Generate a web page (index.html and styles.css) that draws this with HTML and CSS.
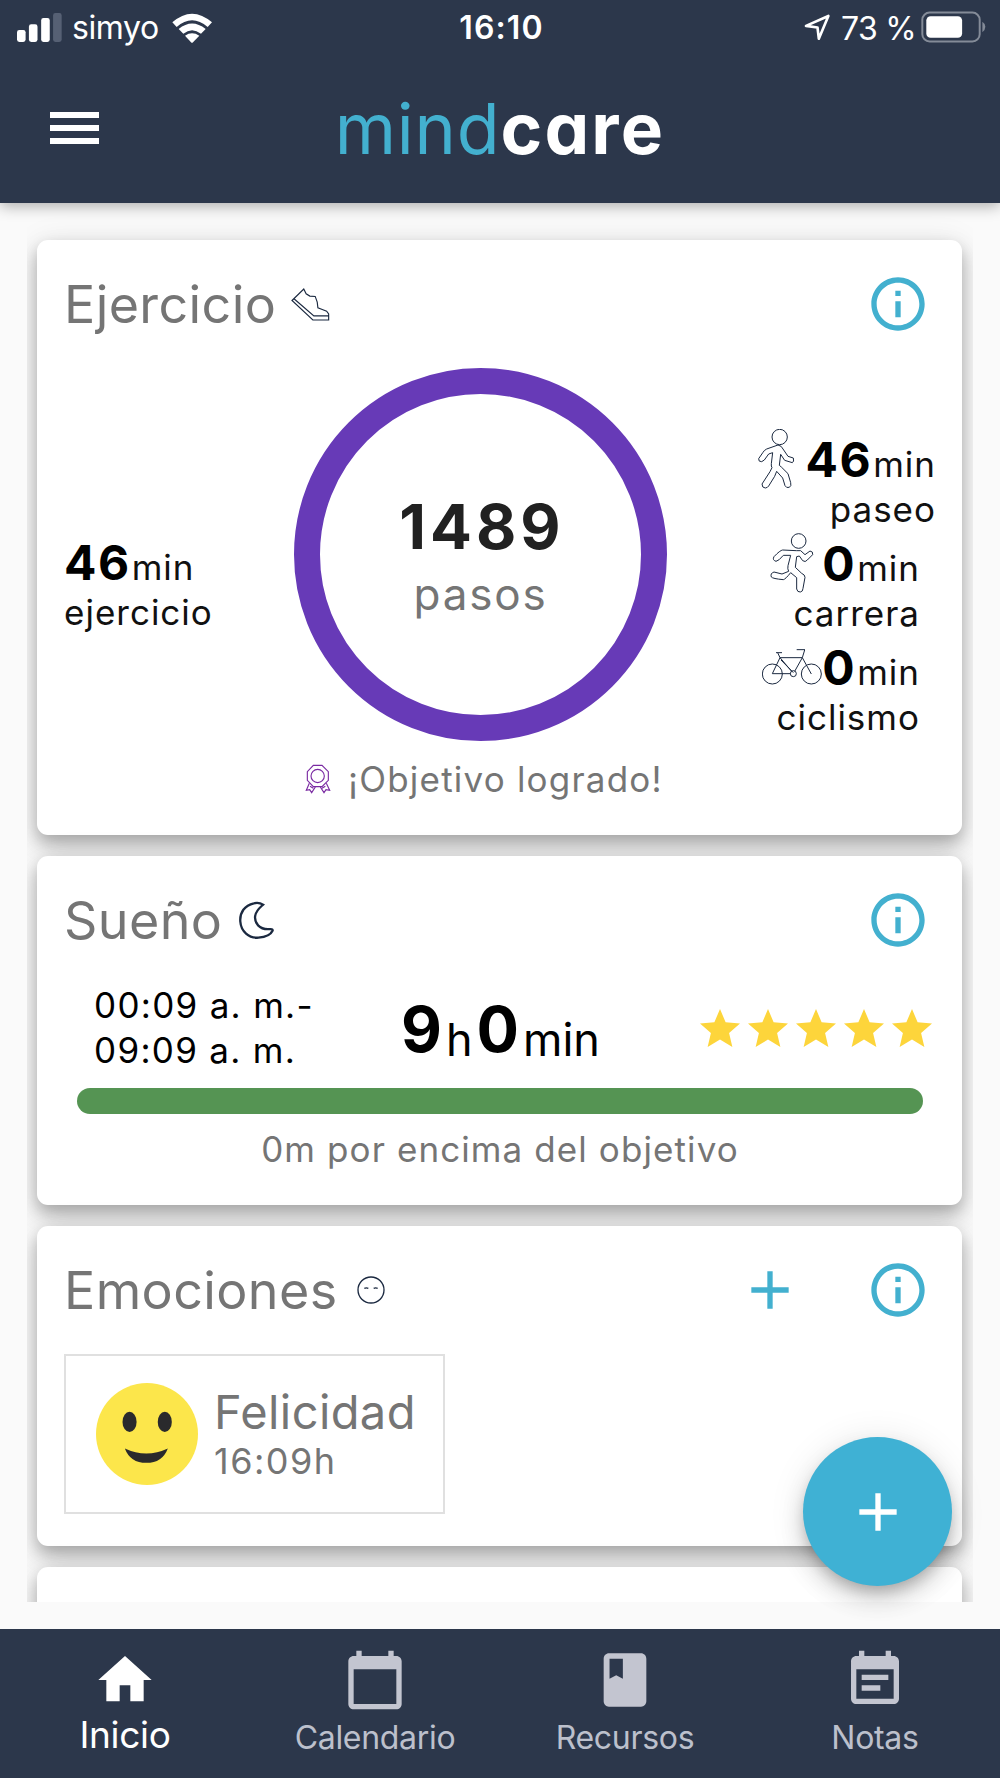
FILE: index.html
```html
<!DOCTYPE html>
<html lang="es">
<head>
    <meta charset="UTF-8">
    <meta name="viewport" content="width=device-width, initial-scale=1.0">
    <title>mindcare</title>

    <link rel="stylesheet" href="styles.css">
</head>
<body>

    <header class="header">
        <div class="status-bar">
            <div class="status-left">
                <svg class="signal" viewBox="51 36 136 87">
                    <rect x="51" y="87" width="26" height="36" rx="7"/>
                    <rect x="87" y="70" width="26" height="53" rx="7"/>
                    <rect x="124" y="51" width="26" height="72" rx="7"/>
                    <rect class="off" x="160" y="36" width="26" height="87" rx="7"/>
                </svg>
                <span class="carrier">simyo</span>
                <svg class="wifi" viewBox="514 36 120 90">
                    <path d="M515 64Q574 12 634 64L621 78Q574 38 528 78Z"/>
                    <path d="M534 84Q574 51 615 84L601 98Q574 77 548 98Z"/>
                    <path d="M553 104Q574 90 596 104L577 124Q574 127 571 124Z"/>
                </svg>
            </div>
            <div class="clock">16:10</div>
            <div class="status-right">
                <svg class="arrow" viewBox="914 43 80 82">
                    <path d="M919 79L987 49L958 118L954 84Z"/>
                </svg>
                <span class="percent">73 %</span>
                <svg class="battery" viewBox="1262 31 196 95">
                    <rect class="shell" x="1266" y="35" width="173" height="87" rx="22"/>
                    <rect x="1278" y="46" width="108" height="65" rx="13"/>
                    <path class="nub" d="M1447 63Q1456 69 1456 78T1447 94Z"/>
                </svg>
            </div>
        </div>
        <div class="toolbar">
            <div class="menu-btn"><i></i><i></i><i></i></div>
            <div class="logo"><span class="mind">mind</span><span class="care">care</span></div>
        </div>
    </header>

    <main class="list">

        <!-- Ejercicio -->
        <section class="card exercise">
            <div class="card-header">
                <h2>Ejercicio</h2>
                <svg class="shoe" viewBox="812 203 116 98">
                    <path d="M815 240L850 206L857 220L868 227L884 228L890 245L892 262L905 267L918 272L924 280V298H877ZM820 234L880 286H924"/>
                </svg>
                <svg class="icon info" viewBox="0 0 24 24"><path d="M11 7h2v2h-2zm0 4h2v6h-2zm1-9C6.48 2 2 6.48 2 12s4.48 10 10 10 10-4.48 10-10S17.52 2 12 2zm0 18c-4.41 0-8-3.59-8-8s3.59-8 8-8 8 3.59 8 8-3.59 8-8 8z"/></svg>
            </div>
            <div class="exercise-body">
                <div class="total">
                    <div><b>46</b>min</div>
                    <div>ejercicio</div>
                </div>
                <div class="ring">
                    <span class="steps">1489</span>
                    <span class="steps-label">pasos</span>
                </div>
                <div class="activities">
                    <div class="activity first">
                        <div class="activity-time">
                            <svg viewBox="136 56 180 180">
                                <circle cx="237" cy="80" r="23"/>
                                <path d="M232 104L198 116Q190 120 187 126L174 145Q173 155 183 154L191 149L204 131L216 127L212 160Q211 168 214 172L208 184L184 221Q184 233 194 233Q201 232 204 227L222 198L228 183L246 203L253 226Q257 234 266 231Q273 227 270 217L262 190L242 170L236 165L240 132L252 150L275 157Q281 154 278 143L262 138L247 116Q243 106 232 104Z"/>
                            </svg>
                            <b>46</b>min
                        </div>
                        <div class="activity-name">paseo</div>
                    </div>
                    <div class="activity">
                        <div class="activity-time">
                            <svg viewBox="186 367 180 180">
                                <circle cx="296" cy="391" r="22"/>
                                <path d="M289 420L248 418Q240 419 222 438Q216 448 228 452Q236 451 250 434H272L264 465Q262 475 266 482L246 490L222 484Q210 488 214 499Q218 504 250 507Q256 506 272 486L290 501V535Q292 545 301 544Q309 543 309 533L315 500Q315 492 305 488L286 470L290 438L298 436L308 450Q316 456 322 448L338 432Q340 422 330 421L315 432L302 420Z"/>
                            </svg>
                            <b>0</b>min
                        </div>
                        <div class="activity-name">carrera</div>
                    </div>
                    <div class="activity">
                        <div class="activity-time">
                            <svg viewBox="186 681 180 180">
                                <circle cx="217" cy="792" r="30"/>
                                <circle cx="334" cy="792" r="30"/>
                                <circle cx="280" cy="791" r="9"/>
                                <path d="M272 791H217L240 743L233 728M228 728H246M240 743L275 784M240 743H307L284 784M243 750L280 788M334 792L307 743L314 720M290 719H315"/>
                            </svg>
                            <b>0</b>min
                        </div>
                        <div class="activity-name">ciclismo</div>
                    </div>
                </div>
            </div>
            <div class="goal">
                <svg class="medal" viewBox="853 105 78 90">
                    <path d="M878 109H904L923 128V154L904 173H878L860 154V128Z"/>
                    <circle cx="891" cy="141" r="20"/>
                    <path d="M866 163L857 184L867 182L873 191L884 174M917 163L927 184L916 182L910 191L899 174M868 172L878 178M914 172L904 178"/>
                </svg>
                <span>¡Objetivo logrado!</span>
            </div>
        </section>

        <!-- Sueño -->
        <section class="card sleep">
            <div class="card-header">
                <h2>Sueño</h2>
                <svg class="moon" viewBox="653 510 110 118">
                    <path d="M728 521Q715 513 700 517C672 523 657 545 659 572C661 602 685 623 714 621C735 619 752 610 757 599Q757 594 747 595C716 597 701 576 704 555C707 538 717 531 728 521Z"/>
                </svg>
                <svg class="icon info" viewBox="0 0 24 24"><path d="M11 7h2v2h-2zm0 4h2v6h-2zm1-9C6.48 2 2 6.48 2 12s4.48 10 10 10 10-4.48 10-10S17.52 2 12 2zm0 18c-4.41 0-8-3.59-8-8s3.59-8 8-8 8 3.59 8 8-3.59 8-8 8z"/></svg>
            </div>
            <div class="sleep-body">
                <div class="hours">00:09 a. m.-<br>09:09 a. m.</div>
                <div class="duration"><b>9</b><span>h</span><b>0</b><span>min</span></div>
                <div class="stars">
                    <svg viewBox="0 0 24 24"><path d="M12 17.27L18.18 21l-1.64-7.03L22 9.24l-7.19-.61L12 2 9.19 8.63 2 9.24l5.46 4.73L5.82 21z"/></svg>
                    <svg viewBox="0 0 24 24"><path d="M12 17.27L18.18 21l-1.64-7.03L22 9.24l-7.19-.61L12 2 9.19 8.63 2 9.24l5.46 4.73L5.82 21z"/></svg>
                    <svg viewBox="0 0 24 24"><path d="M12 17.27L18.18 21l-1.64-7.03L22 9.24l-7.19-.61L12 2 9.19 8.63 2 9.24l5.46 4.73L5.82 21z"/></svg>
                    <svg viewBox="0 0 24 24"><path d="M12 17.27L18.18 21l-1.64-7.03L22 9.24l-7.19-.61L12 2 9.19 8.63 2 9.24l5.46 4.73L5.82 21z"/></svg>
                    <svg viewBox="0 0 24 24"><path d="M12 17.27L18.18 21l-1.64-7.03L22 9.24l-7.19-.61L12 2 9.19 8.63 2 9.24l5.46 4.73L5.82 21z"/></svg>
                </div>
            </div>
            <div class="progress"></div>
            <div class="sleep-goal">0m por encima del objetivo</div>
        </section>

        <!-- Emociones -->
        <section class="card emotions">
            <div class="card-header">
                <h2>Emociones</h2>
                <svg class="face" viewBox="1009 558 84 84">
                    <circle cx="1051" cy="600" r="39"/>
                    <path d="M1031 595Q1037 592 1043 595M1059 595Q1065 592 1071 595"/>
                </svg>
                <svg class="icon add" viewBox="0 0 24 24"><path d="M19 13h-6v6h-2v-6H5v-2h6V5h2v6h6v2z"/></svg>
                <svg class="icon info" viewBox="0 0 24 24"><path d="M11 7h2v2h-2zm0 4h2v6h-2zm1-9C6.48 2 2 6.48 2 12s4.48 10 10 10 10-4.48 10-10S17.52 2 12 2zm0 18c-4.41 0-8-3.59-8-8s3.59-8 8-8 8 3.59 8 8-3.59 8-8 8z"/></svg>
            </div>
            <div class="emotion">
                <svg class="smiley" viewBox="228 880 304 304">
                    <circle class="skin" cx="380" cy="1032" r="152"/>
                    <ellipse cx="328" cy="996" rx="21" ry="30"/>
                    <ellipse cx="433" cy="996" rx="21" ry="30"/>
                    <path d="M314 1075Q378 1105 442 1075Q426 1118 378 1118T314 1075Z"/>
                </svg>
                <div>
                    <div class="emotion-name">Felicidad</div>
                    <div class="emotion-time">16:09h</div>
                </div>
            </div>
        </section>

        <section class="card next"></section>
    </main>

    <div class="fab">
        <svg class="icon" viewBox="0 0 24 24"><path d="M19 13h-6v6h-2v-6H5v-2h6V5h2v6h6v2z"/></svg>
    </div>

    <nav class="bottom-nav">
        <div class="nav-item active">
            <svg class="icon" viewBox="0 0 24 24"><path d="M10 20v-6h4v6h5v-8h3L12 3 2 12h3v8z"/></svg>
            <span>Inicio</span>
        </div>
        <div class="nav-item">
            <svg class="icon" viewBox="0 0 24 24"><path d="M20 3h-1V1h-2v2H7V1H5v2H4c-1.1 0-2 .9-2 2v16c0 1.1.9 2 2 2h16c1.1 0 2-.9 2-2V5c0-1.1-.9-2-2-2zm0 18H4V8h16v13z"/></svg>
            <span>Calendario</span>
        </div>
        <div class="nav-item">
            <svg class="icon" viewBox="0 0 24 24"><path fill-rule="evenodd" d="M18 2H6c-1.100 0-2 .9-2 2v16c0 1.100.9 2 2 2h12c1.100 0 2-.9 2-2V4c0-1.100-.9-2-2-2zM6.200 4h5v7.500l-2.500-1.300-2.500 1.300z"/></svg>
            <span>Recursos</span>
        </div>
        <div class="nav-item">
            <svg class="icon" viewBox="0 0 24 24"><path d="M17 10H7v2h10v-2zm2-7h-1V1h-2v2H8V1H6v2H5c-1.110 0-1.990.9-1.990 2L3 19c0 1.100.890 2 2 2h14c1.100 0 2-.9 2-2V5c0-1.100-.9-2-2-2zm0 16H5V8h14v11zm-5-5H7v2h7v-2z"/></svg>
            <span>Notas</span>
        </div>
    </nav>

</body>
</html>
```
FILE: styles.css
```css
* {
    box-sizing: border-box;
}

body {
    font-family: Inter, "Liberation Sans", sans-serif;
    font-size: 35px;
    font-weight: 380;
    background-color: #fafafa;
    color: #111;
    margin: 0;
    height: 1778px;
    display: flex;
    flex-direction: column;
    position: relative;
    overflow: hidden;
}

svg {
    display: block;
    flex: none;
}

b {
    font-weight: 650;
    color: #000;
}

.icon {
    width: 64px;
    height: 64px;
}

/* header */
.header {
    height: 203px;
    flex: none;
    background: #2c374b;
    color: #fff;
    box-shadow: 0 3px 14px rgba(0, 0, 0, 0.32);
    position: relative;
    z-index: 1;
}

.status-bar {
    height: 55px;
    padding: 0 14px 0 17px;
    display: grid;
    grid-template-columns: 1fr auto 1fr;
    align-items: center;
    font-size: 32px;
    font-weight: 400;
}

.status-bar svg {
    fill: #fff;
}

.status-left,
.status-right {
    display: flex;
    align-items: center;
}

.status-right {
    justify-content: flex-end;
}

.signal {
    width: 45px;
    height: 29px;
}

.signal .off {
    fill: #566074;
}

.carrier {
    margin-left: 10px;
    letter-spacing: -0.4px;
}

.wifi {
    width: 40px;
    height: 30px;
    margin-left: 13px;
}

.clock {
    font-weight: 600;
    letter-spacing: 1.1px;
}

.arrow {
    width: 27px;
    height: 27px;
}

.status-bar .arrow path {
    fill: none;
    stroke: #fff;
    stroke-width: 8;
    stroke-linejoin: round;
}

.percent {
    margin: 1px 5px 0 10px;
    letter-spacing: -0.7px;
}

.battery {
    width: 65px;
    height: 32px;
    margin-top: -2px;
}

.status-bar .shell {
    fill: none;
    stroke: #848b98;
    stroke-width: 6;
}

.status-bar .nub {
    fill: #848b98;
}

.toolbar {
    height: 147px;
    padding: 0 50px;
    display: grid;
    grid-template-columns: 1fr auto 1fr;
    align-items: center;
}

.menu-btn {
    display: flex;
    flex-direction: column;
    gap: 7px;
    margin-bottom: 1px;
}

.menu-btn i {
    width: 49px;
    height: 6px;
    background: #fff;
}

.logo {
    font-feature-settings: "cv11";
    line-height: 80px;
    padding-top: 12px;
    white-space: nowrap;
}

.mind {
    font-size: 70px;
    font-weight: 370;
    color: #43b0cf;
    letter-spacing: 0.8px;
}

.care {
    font-size: 71px;
    font-weight: 680;
    letter-spacing: 2.2px;
}

/* cards */
.list {
    height: 1399px;
    flex: none;
    margin: 0 27px;
    padding: 37px 11px 0 10px;
    display: flex;
    flex-direction: column;
    gap: 21px;
    overflow: hidden;
}

.card {
    flex: none;
    background: #fff;
    border-radius: 11px;
    padding: 0 26px 0 27px;
    box-shadow: 0 7px 14px -1px rgba(0, 0, 0, 0.17), 0 12px 22px 2px rgba(0, 0, 0, 0.15), 0 4px 32px rgba(0, 0, 0, 0.1);
}

.card-header {
    height: 128px;
    display: flex;
    align-items: center;
    color: #757575;
}

.card-header h2 {
    margin: 0;
    font-size: 52px;
    font-weight: 380;
    letter-spacing: 0.4px;
}

.card-header .icon {
    fill: #43b0cf;
}

.info {
    margin-left: auto;
    margin-right: 6px;
}

.add {
    margin-left: auto;
}

.add + .info {
    margin-left: 64px;
}

.shoe,
.moon,
.face,
.medal,
.activity svg {
    fill: none;
    stroke: #1b2940;
    stroke-width: 3.4;
}

/* exercise */
.exercise {
    height: 595px;
}

.shoe {
    width: 39px;
    height: 33px;
    margin-left: 15px;
}

.exercise-body {
    height: 373px;
    display: grid;
    grid-template-columns: 230px 373px 1fr;
}

.exercise-body b {
    font-size: 48px;
    letter-spacing: 1.5px;
    margin-right: 1px;
}

.total {
    padding-top: 172px;
    line-height: 45px;
    letter-spacing: 1px;
}

.total div:first-child {
    white-space: nowrap;
}

.ring {
    border: 26px solid #673ab7;
    border-radius: 50%;
    display: flex;
    flex-direction: column;
    align-items: center;
    padding-top: 95px;
}

.steps {
    font-size: 62px;
    font-weight: 660;
    line-height: 76px;
    letter-spacing: 4px;
    margin-right: -3px;
    color: #212121;
}

.steps-label {
    font-size: 44px;
    line-height: 58px;
    letter-spacing: 1.8px;
    color: #757575;
}

.activities {
    padding-top: 61px;
    letter-spacing: 1px;
}

.activity {
    margin-right: 16px;
    text-align: right;
}

.activity.first {
    margin-right: 0;
}

.activity-time {
    height: 59px;
    display: flex;
    align-items: baseline;
    justify-content: flex-end;
    line-height: 61px;
}

.activity svg {
    width: 60px;
    height: 60px;
    align-self: flex-start;
    stroke-width: 3;
}

.activity-name {
    line-height: 45px;
    margin-top: -1px;
    padding-bottom: 1px;
}

.goal {
    height: 75px;
    display: flex;
    align-items: center;
    color: #757575;
    padding-left: 241px;
    letter-spacing: 1.2px;
}

.medal {
    width: 26px;
    height: 30px;
    margin-right: 17px;
    stroke: #7a2aa2;
}

/* sleep */
.sleep {
    height: 349px;
}

.moon {
    width: 37px;
    height: 39px;
    margin-left: 16px;
    stroke-width: 7;
}

.sleep-body {
    height: 104px;
    display: grid;
    grid-template-columns: 309px 1fr auto;
    align-items: start;
}

.hours {
    padding-left: 30px;
    line-height: 45px;
    letter-spacing: 1.3px;
    margin-top: -1px;
    color: #000;
}

.duration {
    display: flex;
    align-items: flex-start;
    padding-left: 28px;
    color: #000;
    line-height: 91px;
}

.duration b {
    font-size: 63px;
    font-weight: 650;
}

.duration span {
    font-size: 45px;
    margin: 10px 4px 0 4px;
}

.stars {
    display: flex;
    margin-top: 21px;
}

.stars svg {
    width: 48px;
    height: 48px;
    fill: #fdd53b;
}

.progress {
    height: 26px;
    margin: 0 13px;
    border-radius: 13px;
    background: #559453;
}

.sleep-goal {
    line-height: 70px;
    text-align: center;
    color: #757575;
    letter-spacing: 1.1px;
}

/* emotions */
.emotions {
    height: 320px;
}

.face {
    width: 28px;
    height: 28px;
    margin-left: 19px;
    stroke-width: 4;
}

.emotion {
    width: 381px;
    height: 160px;
    border: 2px solid #e0e0e0;
    display: flex;
    align-items: center;
    color: #757575;
    padding-left: 30px;
}

.smiley {
    width: 102px;
    height: 102px;
    margin-right: 16px;
    fill: #2a2a2c;
}

.smiley .skin {
    fill: #fce64b;
}

.emotion-name {
    font-size: 47px;
    line-height: 52px;
    letter-spacing: 0.4px;
    padding-top: 2px;
}

.emotion-time {
    font-size: 36px;
    line-height: 46px;
    letter-spacing: 1.5px;
}

.next {
    height: 200px;
}

.fab {
    position: absolute;
    left: 803px;
    top: 1437px;
    width: 149px;
    height: 149px;
    border-radius: 50%;
    background: #3fb1d4;
    fill: #fff;
    display: flex;
    align-items: center;
    justify-content: center;
    box-shadow: 0 8px 13px -3px rgba(0, 0, 0, 0.2), 0 14px 24px rgba(0, 0, 0, 0.14), 0 3px 36px rgba(0, 0, 0, 0.1);
}

/* bottom navigation */
.bottom-nav {
    margin-top: auto;
    height: 149px;
    flex: none;
    display: flex;
    background: #2c374b;
    position: relative;
}

.nav-item {
    flex: 1;
    display: flex;
    flex-direction: column;
    align-items: center;
    padding-top: 19px;
    color: #bcc0cc;
    fill: #c3c5d0;
    font-size: 32px;
    font-weight: 430;
    line-height: 51px;
    letter-spacing: -0.3px;
}

.nav-item.active {
    color: #fff;
    fill: #fff;
    font-size: 37px;
    line-height: 45px;
}
```
